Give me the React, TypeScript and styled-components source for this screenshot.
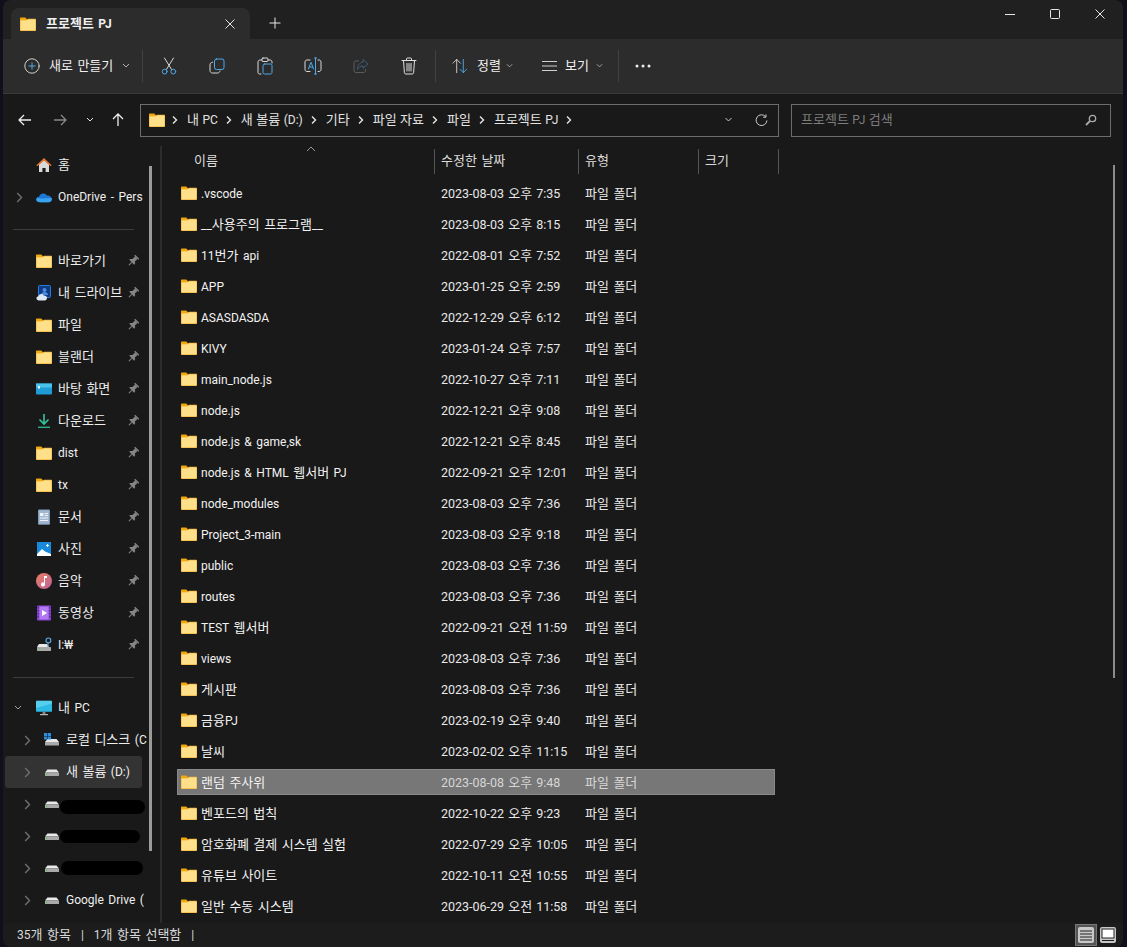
import React from "react";
import styled, { createGlobalStyle } from "styled-components";

const Global = createGlobalStyle`
  html, body { margin: 0; padding: 0; height: 100%; background: #10101a; }
  #root { height: 100%; }
  * { box-sizing: border-box; }
`;

const FONT = `Roboto, "Noto Sans CJK KR", sans-serif`;

const Window = styled.div`
  width: 1127px; height: 947px; padding-left: 3px; padding-right: 4px;
  display: flex; flex-direction: column;
  background: #10101a; font-family: ${FONT}; font-size: 12px; word-spacing: 1.5px; color: #ececec; overflow: hidden;
`;
const Han = styled.span`
  font-family: "Noto Sans CJK KR", sans-serif; font-size: 13px; line-height: 0;
`;
const Mixed = ({ children }: { children: string }) => (
  <>
    {children.split(/([\uAC00-\uD7A3]+)/).map((part, i) =>
      i % 2 === 1 ? <Han key={i}>{part}</Han> : part
    )}
  </>
);

const TitleBar = styled.div`
  height: 39px; flex: none; display: flex; align-items: flex-end; padding-left: 8px;
  background: #202020; border-radius: 8px 8px 0 0;
`;
const Tab = styled.div`
  width: 239px; height: 31px; display: flex; align-items: center; padding: 0 15px 0 9px;
  background: #2c2c2c; border-radius: 8px 8px 0 0;
`;
const TabTitle = styled.span`
  flex: 1; margin-left: 10px; font-weight: 700; color: #f0f0f0;
`;
const NewTab = styled.div`
  margin: 0 0 10px 19px; width: 12px; height: 12px; display: flex;
`;
const Spacer = styled.div`flex: 1;`;
const Caption = styled.div`
  align-self: flex-start; display: flex; margin-top: 9px; margin-right: 18px; gap: 35px;
`;
const CaptionButton = styled.div`width: 10px; height: 10px; display: flex;`;

const Toolbar = styled.div`
  height: 55px; flex: none; display: flex; align-items: center; padding-left: 21px;
  background: #2c2c2c; border-bottom: 1px solid #3a3a3a;
`;
const ToolLabel = styled.span`color: #f0f0f0; white-space: nowrap;`;
const ToolGroup = styled.div<{ $gap?: number; $w?: number; $ml?: number }>`
  display: flex; align-items: center; gap: ${(p) => p.$gap ?? 6}px; flex: none;
  width: ${(p) => (p.$w ? `${p.$w}px` : "auto")}; margin-left: ${(p) => p.$ml ?? 0}px;
`;
const Caret = styled.div<{ $ml?: number }>`
  display: flex; margin-left: ${(p) => p.$ml ?? 0}px;
`;
const ToolSep = styled.div<{ $ml?: number }>`
  width: 1px; height: 32px; background: #424242; flex: none; margin-left: ${(p) => p.$ml ?? 0}px;
`;
const IconSlot = styled.div<{ $ml?: number }>`
  width: 20px; height: 20px; display: flex; align-items: center; justify-content: center; flex: none;
  margin-left: ${(p) => p.$ml ?? 0}px;
`;

const NavRow = styled.div`
  height: 52px; flex: none; display: flex; align-items: center; padding-left: 12px; background: #191919;
`;
const NavBtn = styled.div<{ $ml?: number }>`
  width: 20px; height: 20px; display: flex; align-items: center; justify-content: center; flex: none;
  margin-left: ${(p) => p.$ml ?? 0}px;
`;
const Address = styled.div`
  width: 639px; height: 33px; margin-left: 12px; display: flex; align-items: center; padding: 0 10px 0 8px;
  border: 1px solid #6d6d6d; background: #191919; flex: none;
`;
const Crumbs = styled.div`
  flex: 1; display: flex; align-items: center; gap: 6px; margin-left: 5px; color: #e4e4e4; white-space: nowrap; word-spacing: 0.5px;
`;
const Chev = styled.span`display: inline-flex; width: 8px; height: 10px; margin: 0 2px 0 1px;`;
const AddressTools = styled.div`display: flex; align-items: center; gap: 22px;`;
const Search = styled.div`
  width: 320px; height: 33px; margin-left: 12px; display: flex; align-items: center; justify-content: space-between;
  padding: 0 13px 0 9px; border: 1px solid #6d6d6d; color: #7d7d7d; flex: none; word-spacing: 0.5px;
`;

const Body = styled.div`flex: 1; min-height: 0; display: flex; background: #191919;`;
const Sidebar = styled.div`
  width: 159px; flex: none; display: flex; border-right: 2px solid #2c2c2c;
`;
const SideList = styled.div`
  width: 140px; padding-top: 3px; flex: none; display: flex; flex-direction: column;
`;
const SideThumb = styled.div`
  width: 3px; height: 685px; margin: 20px 0 0 6px; background: #9b9b9b; flex: none;
`;
const SideRow = styled.div<{ $sel?: boolean }>`
  height: 32px; flex: none; display: flex; align-items: center; position: relative; white-space: nowrap;
  background: ${(p) => (p.$sel ? "#333333" : "transparent")};
  border-radius: 3px; margin-left: ${(p) => (p.$sel ? "2px" : "0")}; margin-right: ${(p) => (p.$sel ? "1px" : "0")};
`;
const Expander = styled.div<{ $x: number }>`
  width: ${(p) => p.$x}px; flex: none; display: flex; justify-content: flex-end; padding-right: 13px;
`;
const SideIcon = styled.div`
  width: 16px; height: 16px; flex: none; display: flex; margin-right: 6px;
`;
const SideText = styled.span`flex: 1; color: #eeeeee;`;
const Pin = styled.div`
  width: 12px; height: 12px; flex: none; display: flex; margin-right: 4px;
`;
const Rule = styled.div<{ $t: number; $b: number }>`
  height: 1px; flex: none; background: #3d3d3d; width: 121px;
  margin: ${(p) => p.$t}px 6px ${(p) => p.$b}px 10px;
`;
const Blob = styled.div<{ $l: number; $w: number; $t: number; $h: number }>`
  position: absolute; left: ${(p) => p.$l}px; width: ${(p) => p.$w}px; top: ${(p) => p.$t}px; height: ${(p) => p.$h}px;
  background: #000; border-radius: 8px;
`;

const Main = styled.div`flex: 1; min-width: 0; display: flex; position: relative;`;
const Content = styled.div`width: 620px; flex: none; padding: 3px 0 0 15px;`;
const Header = styled.div`
  height: 25px; display: flex; color: #dcdcdc; position: relative; margin-bottom: 6px; margin-left: 1px;
`;
const HeadCell = styled.div<{ $w: number; $pl?: number }>`
  width: ${(p) => p.$w}px; flex: none; display: flex; align-items: center; padding-left: ${(p) => p.$pl ?? 6}px;
  border-right: 1px solid #555; padding-bottom: 2px;
`;
const SortCaret = styled.div`
  position: absolute; left: 128px; top: -3px; width: 10px; height: 6px; display: flex;
`;
const Rows = styled.div`display: flex; flex-direction: column; gap: 5px; width: 598px;`;
const Row = styled.div<{ $sel?: boolean }>`
  height: 26px; display: flex; align-items: center; flex: none; padding-top: 1px;
  background: ${(p) => (p.$sel ? "#777777" : "transparent")};
  outline: ${(p) => (p.$sel ? "1px solid #8a8a8a" : "none")}; outline-offset: -1px;
  color: ${(p) => (p.$sel ? "#d6d6d6" : "#e8e8e8")}; white-space: nowrap;
`;
const NameCell = styled.div`
  width: 258px; flex: none; display: flex; align-items: center; gap: 4px; padding-left: 4px; color: #f2f2f2;
`;
const FolderBox = styled.div`width: 16px; height: 16px; flex: none; display: flex; margin-top: -1px;`;
const DateCell = styled.div`width: 144px; flex: none; padding-left: 6px; font-size: 12.5px; word-spacing: 1px;`;
const TypeCell = styled.div`flex: 1; padding-left: 6px;`;
const MainThumb = styled.div`
  position: absolute; right: 8px; top: 19px; width: 2px; height: 513px; background: #8c8c8c;
`;

const Status = styled.div`
  height: 24px; flex: none; display: flex; align-items: center; padding: 0 4px 0 14px; gap: 10px;
  background: #1c1c1c; color: #d8d8d8; border-radius: 0 0 8px 8px;
`;
const StatusText = styled.span`white-space: pre;`;
const ViewSwitch = styled.div`display: flex;`;
const ViewBtn = styled.div<{ $on?: boolean }>`
  width: 22px; height: 22px; display: flex; align-items: center; justify-content: center; flex: none;
  background: ${(p) => (p.$on ? "#555" : "transparent")}; border: 1px solid ${(p) => (p.$on ? "#777" : "transparent")};
`;
const ViewIcon = styled.div`
  width: 16px; height: 16px; display: flex; background: #c8c8c8; border-radius: 2px;
`;

const Folder = () => (
  <svg width="16" height="16" viewBox="0 0 16 16" style={{ flex: "none" }}>
    <path d="M0 2.600C0 2 .4 1.600 1 1.600h4.200L7 3.200V6H0z" fill="#f0a90c" />
    <path d="M0 5c0-.7.4-1.100 1-1.100h5.300L8 2.700h7c.6 0 1 .4 1 1V14c0 .6-.4 1-1 1H1c-.6 0-1-.4-1-1z" fill="#f6b73c" />
    <path d="M.6 5.200c0-.4.2-.6.6-.6h5.400L8.200 3.400h6.600c.4 0 .6.2.6.6v9.700c0 .4-.2.6-.6.6H1.200c-.4 0-.6-.2-.6-.6z" fill="#ffe08a" />
  </svg>
);

const S = { fill: "none", stroke: "currentColor", strokeWidth: 1, strokeLinecap: "round" as const, strokeLinejoin: "round" as const };
const BLUE = "#4ea9e6";

const ChevRight = ({ c = "#6f6f6f" }: { c?: string }) => (
  <svg width="7" height="11" viewBox="0 0 7 11"><path d="M1.200 1l4.300 4.500L1.200 10" fill="none" stroke={c} strokeWidth="1.400" /></svg>
);
const ChevDown = ({ c = "#b0b0b0", w = 8 }: { c?: string; w?: number }) => (
  <svg width={w} height="6" viewBox="0 0 8 6"><path d="M1 1l3 3 3-3" fill="none" stroke={c} strokeWidth="1" /></svg>
);
const CrumbSep = () => (
  <Chev><svg width="8" height="10" viewBox="0 0 8 10"><path d="M2 1.500L5.500 5 2 8.500" fill="none" stroke="#e6e6e6" strokeWidth="1.400" /></svg></Chev>
);

const PinIcon = () => (
  <svg width="12" height="12" viewBox="0 0 12 12">
    <g transform="rotate(45 6 6)" fill="#858585">
      <rect x="3.200" y="0" width="5.600" height="1.500" />
      <path d="M4.300 1.500h3.400V5l1.800 1.500v1.300h-7V6.500L4.300 5z" />
      <rect x="5.500" y="7.800" width="1" height="4" />
    </g>
  </svg>
);

const Home = () => (
  <svg width="16" height="16" viewBox="0 0 16 16">
    <path d="M3 7.500L8 3l5 4.500V15H9.600v-4H6.400v4H3z" fill="#d9d9d9" />
    <path d="M0.400 8.200L8 1l7.600 7.200-1 1L8 3.200 1.400 9.200z" fill="#e6742c" />
  </svg>
);
const Cloud = () => (
  <svg width="16" height="16" viewBox="0 0 16 16">
    <path d="M4 13.200C1.800 13.200.2 12 .2 10.400c0-1.500 1.200-2.600 2.800-2.700C3.700 5.600 5.300 4.400 7.200 4.400c1.700 0 3 .9 3.700 2.200 2.700-.3 4.900 1.500 4.900 3.700 0 1.700-1.300 2.900-3 2.900z" fill="#1b78d6" />
    <path d="M.2 10.400C.2 12 1.800 13.200 4 13.200h8.800c1.700 0 3-1.200 3-2.900 0-.5-.1-.9-.3-1.300L6 9.500 1 9z" fill="#39a3ee" />
  </svg>
);
const DriveCloud = () => (
  <svg width="16" height="16" viewBox="0 0 16 16">
    <rect x="2.500" y="0.500" width="12" height="12" rx="1" fill="#0d3a80" stroke="#2c7ae0" />
    <circle cx="8.500" cy="5" r="2" fill="#4a8be0" />
    <path d="M5 10c0-1.800 1.500-3 3.500-3s3.500 1.200 3.500 3z" fill="#4a8be0" />
    <path d="M3 15.500c-1.500 0-2.600-1-2.600-2.200s1-2 2-2.100c.5-1.400 1.600-2.200 2.900-2.200 1.100 0 2 .6 2.500 1.500 1.900-.2 3.200 1 3.200 2.600 0 1.200-1 2.400-2.200 2.400z" fill="#dfe8f0" />
  </svg>
);
const Desktop = () => (
  <svg width="16" height="16" viewBox="0 0 16 16">
    <rect y="2.500" width="16" height="11" rx="1" fill="#1f9cd6" />
    <rect y="2.500" width="16" height="4" fill="#47c2ea" />
    <rect x="2" y="5" width="2" height="2.600" fill="#e8f8ff" />
  </svg>
);
const Download = () => (
  <svg width="16" height="16" viewBox="0 0 16 16">
    <path d="M8 1v9" stroke="#35c6a0" strokeWidth="1.600" /><path d="M3.500 6.500L8 11l4.500-4.500" fill="none" stroke="#35c6a0" strokeWidth="1.600" />
    <rect x="2" y="13.600" width="12" height="1.400" fill="#29b08c" />
  </svg>
);
const Docs = () => (
  <svg width="16" height="16" viewBox="0 0 16 16">
    <rect x="2" y="0.400" width="12" height="15.400" rx="1" fill="#7f9cbb" />
    <rect x="3" y="1.200" width="10" height="13.600" fill="#9fb6cc" />
    <path d="M4 4h3.500v3H4zM8.600 4H12v1H8.600zM8.600 6H12v1H8.600zM4 8.500h8v1H4zM4 11h8v1H4z" fill="#eef4f9" />
  </svg>
);
const Photo = () => (
  <svg width="16" height="16" viewBox="0 0 16 16">
    <rect x="1" y="1" width="14" height="14" fill="#1989dc" />
    <path d="M1 13l5-5 3 2.500L15 13v2H1z" fill="#fff" />
    <path d="M11 3h1v1h1v1h-1v1h-1V5h-1V4h1z" fill="#dff" />
  </svg>
);
const Music = () => (
  <svg width="16" height="16" viewBox="0 0 16 16">
    <defs><linearGradient id="mg" x1="0" y1="0" x2="1" y2="1"><stop offset="0" stopColor="#e88060" /><stop offset="1" stopColor="#c0609a" /></linearGradient></defs>
    <circle cx="8" cy="8" r="8" fill="url(#mg)" />
    <path d="M8 3h3v2H9v6.400a2 2 0 1 1-1-1.700z" fill="#fff" />
  </svg>
);
const Video = () => (
  <svg width="16" height="16" viewBox="0 0 16 16">
    <rect x="1" y="0.400" width="14" height="15.200" rx="1" fill="#8a45d6" />
    <rect x="3.400" y="1.600" width="9.200" height="12.800" fill="#b27af0" />
    <path d="M6 5l5 3-5 3z" fill="#fff" />
    <path d="M1.600 2h1v1.400h-1zM1.600 5h1v1.400h-1zM1.600 8h1v1.400h-1zM1.600 11h1v1.400h-1zM13.400 2h1v1.400h-1zM13.400 5h1v1.400h-1zM13.400 8h1v1.400h-1zM13.400 11h1v1.400h-1z" fill="#3c1a70" />
  </svg>
);
const Disk = () => (
  <svg width="16" height="16" viewBox="0 0 16 16">
    <path d="M3.500 5.500h9L15 8.500H1z" fill="#e8e8e8" />
    <rect x="1" y="8.500" width="14" height="3.500" rx=".6" fill="#a9a9a9" />
    <rect x="2.400" y="9.800" width="1.600" height="1" fill="#49d35a" />
  </svg>
);
const NetDisk = () => (
  <svg width="16" height="16" viewBox="0 0 16 16">
    <path d="M3 7h8l2 3H1z" fill="#e8e8e8" />
    <rect x="1" y="10" width="14" height="4" rx=".6" fill="#a9a9a9" />
    <rect x="2.400" y="11.400" width="1.600" height="1" fill="#49d35a" />
    <circle cx="12.400" cy="3.400" r="2.400" fill="none" stroke="#58a8dc" strokeWidth="1.200" />
    <path d="M12 6v4" stroke="#58a8dc" strokeWidth="1" />
  </svg>
);
const WinDisk = () => (
  <svg width="16" height="16" viewBox="0 0 16 16">
    <path d="M3.500 7h9L15 10H1z" fill="#e8e8e8" />
    <rect x="1" y="10" width="14" height="3.600" rx=".6" fill="#a9a9a9" />
    <path d="M0 1h3.200v3H0zM3.800 1H7v3H3.800zM0 4.600h3.200v3H0zM3.800 4.600H7v3H3.800z" fill="#2b8fe0" />
  </svg>
);
const Monitor = () => (
  <svg width="16" height="16" viewBox="0 0 16 16">
    <rect x="0" y="0.800" width="16" height="11" rx=".8" fill="#2dbbe6" />
    <path d="M0 1.600c0-.5.3-.8.8-.8h14.400c.5 0 .8.3.8.8v2L0 8z" fill="#6fdcf0" opacity=".6" />
    <rect x="6.600" y="11.800" width="2.800" height="2.400" fill="#8a8a8a" />
    <rect x="4" y="14" width="8" height="1.200" fill="#b5b5b5" />
  </svg>
);

type Side = { t: string; i: React.ReactNode };
const quick: Side[] = [
  { t: "바로가기", i: <Folder /> },
  { t: "내 드라이브", i: <DriveCloud /> },
  { t: "파일", i: <Folder /> },
  { t: "블랜더", i: <Folder /> },
  { t: "바탕 화면", i: <Desktop /> },
  { t: "다운로드", i: <Download /> },
  { t: "dist", i: <Folder /> },
  { t: "tx", i: <Folder /> },
  { t: "문서", i: <Docs /> },
  { t: "사진", i: <Photo /> },
  { t: "음악", i: <Music /> },
  { t: "동영상", i: <Video /> },
  { t: "I:₩", i: <NetDisk /> },
];

const files: [string, string][] = [
  [".vscode", "2023-08-03 오후 7:35"],
  ["__사용주의 프로그램__", "2023-08-03 오후 8:15"],
  ["11번가 api", "2022-08-01 오후 7:52"],
  ["APP", "2023-01-25 오후 2:59"],
  ["ASASDASDA", "2022-12-29 오후 6:12"],
  ["KIVY", "2023-01-24 오후 7:57"],
  ["main_node.js", "2022-10-27 오후 7:11"],
  ["node.js", "2022-12-21 오후 9:08"],
  ["node.js & game,sk", "2022-12-21 오후 8:45"],
  ["node.js & HTML 웹서버 PJ", "2022-09-21 오후 12:01"],
  ["node_modules", "2023-08-03 오후 7:36"],
  ["Project_3-main", "2023-08-03 오후 9:18"],
  ["public", "2023-08-03 오후 7:36"],
  ["routes", "2023-08-03 오후 7:36"],
  ["TEST 웹서버", "2022-09-21 오전 11:59"],
  ["views", "2023-08-03 오후 7:36"],
  ["게시판", "2023-08-03 오후 7:36"],
  ["금융PJ", "2023-02-19 오후 9:40"],
  ["날씨", "2023-02-02 오후 11:15"],
  ["랜덤 주사위", "2023-08-08 오후 9:48"],
  ["벤포드의 법칙", "2022-10-22 오후 9:23"],
  ["암호화폐 결제 시스템 실험", "2022-07-29 오후 10:05"],
  ["유튜브 사이트", "2022-10-11 오전 10:55"],
  ["일반 수동 시스템", "2023-06-29 오전 11:58"],
];

const crumbs = ["내 PC", "새 볼륨 (D:)", "기타", "파일 자료", "파일", "프로젝트 PJ"];

export default function App() {
  return (
    <Window>
      <Global />
      <TitleBar>
        <Tab>
          <Folder />
          <TabTitle><Mixed>프로젝트 PJ</Mixed></TabTitle>
          <svg width="10" height="10" viewBox="0 0 10 10"><path d="M.5.5l9 9M9.500.5l-9 9" stroke="#e6e6e6" /></svg>
        </Tab>
        <NewTab>
          <svg width="12" height="12" viewBox="0 0 12 12"><path d="M6 .5v11M.5 6h11" stroke="#e8e8e8" /></svg>
        </NewTab>
        <Spacer />
        <Caption>
          <CaptionButton><svg width="10" height="10" viewBox="0 0 10 10"><path d="M0 5.500h10" stroke="#e8e8e8" /></svg></CaptionButton>
          <CaptionButton><svg width="10" height="10" viewBox="0 0 10 10"><rect x=".5" y=".5" width="9" height="9" rx="1" fill="none" stroke="#e8e8e8" /></svg></CaptionButton>
          <CaptionButton><svg width="10" height="10" viewBox="0 0 10 10"><path d="M.5.5l9 9M9.500.5l-9 9" stroke="#e8e8e8" /></svg></CaptionButton>
        </Caption>
      </TitleBar>

      <Toolbar>
        <ToolGroup $gap={9} $w={118}>
          <svg width="16" height="16" viewBox="0 0 16 16" {...S} color="#d0d0d0"><circle cx="8" cy="8" r="7.200" /><path d="M8 4.800v6.400M4.800 8h6.400" stroke={BLUE} /></svg>
          <ToolLabel><Mixed>새로 만들기</Mixed></ToolLabel>
          <ChevDown />
        </ToolGroup>
        <ToolSep />
        <ToolGroup $gap={28} $ml={16}>
          <IconSlot>
            <svg width="16" height="18" viewBox="0 0 16 18" {...S} color="#d8d8d8">
              <path d="M3.500 1l7 11.400M12.500 1l-7 11.400" />
              <circle cx="3.700" cy="14.600" r="2.400" stroke={BLUE} /><circle cx="12.300" cy="14.600" r="2.400" stroke={BLUE} />
            </svg>
          </IconSlot>
          <IconSlot>
            <svg width="16" height="16" viewBox="0 0 16 16" {...S} color="#d8d8d8">
              <rect x="5.500" y="1" width="9.500" height="10.500" rx="2" stroke={BLUE} />
              <path d="M3.500 4.200C2 4.400 1 5.400 1 6.800v5.700C1 14 2 15 3.500 15h5c1.300 0 2.300-.9 2.500-2" />
            </svg>
          </IconSlot>
          <IconSlot>
            <svg width="16" height="18" viewBox="0 0 16 18" {...S} color="#d8d8d8">
              <path d="M5 3H3C1.800 3 1 3.800 1 5v10.500c0 1 .8 1.500 1.500 1.500H4" />
              <path d="M11 3h2c1.200 0 2 .8 2 2v1" />
              <rect x="5" y="1" width="6" height="3.500" rx="1" />
              <rect x="6" y="7" width="9" height="10" rx="1.500" stroke={BLUE} />
            </svg>
          </IconSlot>
          <IconSlot>
            <svg width="18" height="18" viewBox="0 0 18 18" {...S} color="#d8d8d8">
              <path d="M6 3H3C1.800 3 1 3.800 1 5v7.500c0 1.200.8 2 2 2h3M14 3h1.200c1 0 1.800.8 1.800 2v7.500c0 1.200-.8 2-1.800 2H14" />
              <path d="M10.500 1h2M10.500 17h2M11.500 1v16" stroke={BLUE} />
              <path d="M4.500 12l2.300-6.500h.4L9.500 12M5.300 10h3.400" stroke={BLUE} />
            </svg>
          </IconSlot>
          <IconSlot>
            <svg width="16" height="16" viewBox="0 0 16 16" fill="none" stroke="#5d5d5d" strokeLinejoin="round">
              <path d="M6 3H3C1.800 3 1 3.800 1 5v7.500c0 1.200.8 2 2 2h7.500c1.200 0 2-.8 2-2V11" />
              <path d="M10 1.500L15 6l-5 4.300V8C7 8 5.500 9.500 4.500 11.500c0-4 2-7 5.500-7.300z" stroke="#3f5d75" />
            </svg>
          </IconSlot>
          <IconSlot>
            <svg width="16" height="18" viewBox="0 0 16 18" {...S} color="#e0e0e0">
              <path d="M1 3.500h14M5.500 3.500V2c0-.6.4-1 1-1h3c.6 0 1 .4 1 1v1.500" />
              <path d="M2.500 3.500l.9 12.200c.1.800.6 1.300 1.400 1.300h6.400c.8 0 1.300-.5 1.400-1.300l.9-12.200M6 6.500v7.500M8 6.500v7.500M10 6.500v7.500" />
            </svg>
          </IconSlot>
        </ToolGroup>
        <ToolSep $ml={16} />
        <ToolGroup $gap={9} $w={73} $ml={16}>
          <svg width="16" height="16" viewBox="0 0 17 16" {...S} color="#d0d0d0">
            <path d="M5 15V1M1 5l4-4 4 4" />
            <path d="M12 1v14M8.500 11.500L12 15l3.500-3.500" stroke={BLUE} />
          </svg>
          <ToolLabel><Mixed>정렬</Mixed></ToolLabel>
          <Caret $ml={-4}><ChevDown w={7} /></Caret>
        </ToolGroup>
        <ToolGroup $gap={7} $w={69} $ml={16}>
          <svg width="17" height="12" viewBox="0 0 17 12"><path d="M1 1.500h15M1 6h15M1 10.500h15" stroke="#d0d0d0" /></svg>
          <ToolLabel><Mixed>보기</Mixed></ToolLabel>
          <ChevDown w={7} />
        </ToolGroup>
        <ToolSep $ml={8} />
        <IconSlot $ml={14}>
          <svg width="16" height="4" viewBox="0 0 16 4"><circle cx="2" cy="2" r="1.500" fill="#eee" /><circle cx="8" cy="2" r="1.500" fill="#eee" /><circle cx="14" cy="2" r="1.500" fill="#eee" /></svg>
        </IconSlot>
      </Toolbar>

      <NavRow>
        <NavBtn><svg width="14" height="12" viewBox="0 0 14 12" fill="none" stroke="#eee" strokeWidth="1.300"><path d="M13 6H1M6 1L1 6l5 5" /></svg></NavBtn>
        <NavBtn $ml={15}><svg width="14" height="12" viewBox="0 0 14 12" fill="none" stroke="#888" strokeWidth="1.300"><path d="M1 6h12M8 1l5 5-5 5" /></svg></NavBtn>
        <NavBtn $ml={10}><ChevDown c="#e6e6e6" w={10} /></NavBtn>
        <NavBtn $ml={8}><svg width="12" height="14" viewBox="0 0 12 14" fill="none" stroke="#eee" strokeWidth="1.300"><path d="M6 13V1M1 6l5-5 5 5" /></svg></NavBtn>
        <Address>
          <Folder />
          <Crumbs>
            {crumbs.map((c) => (
              <React.Fragment key={c}>
                <CrumbSep />
                <span><Mixed>{c}</Mixed></span>
              </React.Fragment>
            ))}
            <CrumbSep />
            <Spacer />
            <AddressTools>
              <ChevDown c="#c8c8c8" w={9} />
              <svg width="13" height="14" viewBox="0 0 14 14" fill="none" stroke="#d8d8d8">
                <path d="M11.500 3.500A5.800 5.800 0 1 0 12.800 7.500" /><path d="M11.800 1v3h-3" />
              </svg>
            </AddressTools>
          </Crumbs>
        </Address>
        <Search>
          <span><Mixed>프로젝트 PJ 검색</Mixed></span>
          <svg width="12" height="12" viewBox="0 0 12 12" fill="none" stroke="#aaa"><circle cx="7.500" cy="4.500" r="3.200" strokeWidth="1.300" /><path d="M5 7L1 11" strokeWidth="1.800" /></svg>
        </Search>
      </NavRow>

      <Body>
        <Sidebar>
          <SideList>
            <SideRow><Expander $x={33} /><SideIcon><Home /></SideIcon><SideText><Mixed>홈</Mixed></SideText></SideRow>
            <SideRow><Expander $x={33}><ChevRight /></Expander><SideIcon><Cloud /></SideIcon><SideText>OneDrive - Pers</SideText></SideRow>
            <Rule $t={16} $b={15} />
            {quick.map((q) => (
              <SideRow key={q.t}><Expander $x={33} /><SideIcon>{q.i}</SideIcon><SideText><Mixed>{q.t}</Mixed></SideText><Pin><PinIcon /></Pin></SideRow>
            ))}
            <Rule $t={16} $b={14} />
            <SideRow><Expander $x={33}><ChevDown c="#a0a0a0" w={10} /></Expander><SideIcon><Monitor /></SideIcon><SideText><Mixed>내 PC</Mixed></SideText></SideRow>
            <SideRow><Expander $x={41}><ChevRight /></Expander><SideIcon><WinDisk /></SideIcon><SideText><Mixed>로컬 디스크 (C</Mixed></SideText></SideRow>
            <SideRow $sel><Expander $x={39}><ChevRight /></Expander><SideIcon><Disk /></SideIcon><SideText><Mixed>새 볼륨 (D:)</Mixed></SideText></SideRow>
            <SideRow><Expander $x={41}><ChevRight /></Expander><SideIcon><Disk /></SideIcon><Blob $l={57} $w={85} $t={12} $h={14} /></SideRow>
            <SideRow><Expander $x={41}><ChevRight /></Expander><SideIcon><Disk /></SideIcon><Blob $l={57} $w={80} $t={10} $h={13} /></SideRow>
            <SideRow><Expander $x={41}><ChevRight /></Expander><SideIcon><Disk /></SideIcon><Blob $l={58} $w={82} $t={9} $h={14} /></SideRow>
            <SideRow><Expander $x={41}><ChevRight /></Expander><SideIcon><Disk /></SideIcon><SideText>Google Drive (</SideText></SideRow>
          </SideList>
          <SideThumb />
        </Sidebar>
        <Main>
          <Content>
            <Header>
              <HeadCell $w={257} $pl={16}><span><Mixed>이름</Mixed></span></HeadCell>
              <HeadCell $w={144}><span><Mixed>수정한 날짜</Mixed></span></HeadCell>
              <HeadCell $w={120}><span><Mixed>유형</Mixed></span></HeadCell>
              <HeadCell $w={80}><span><Mixed>크기</Mixed></span></HeadCell>
              <SortCaret><svg width="10" height="6" viewBox="0 0 10 6"><path d="M1 5l4-4 4 4" fill="none" stroke="#999" /></svg></SortCaret>
            </Header>
            <Rows>
              {files.map(([name, date]) => (
                <Row key={name} $sel={name === "랜덤 주사위"}>
                  <NameCell><FolderBox><Folder /></FolderBox><span><Mixed>{name}</Mixed></span></NameCell>
                  <DateCell><Mixed>{date}</Mixed></DateCell>
                  <TypeCell><Mixed>파일 폴더</Mixed></TypeCell>
                </Row>
              ))}
            </Rows>
          </Content>
          <MainThumb />
        </Main>
      </Body>

      <Status>
        <StatusText><Mixed>35개 항목</Mixed></StatusText>
        <StatusText>|</StatusText>
        <StatusText><Mixed>1개 항목 선택함</Mixed></StatusText>
        <StatusText>|</StatusText>
        <Spacer />
        <ViewSwitch>
          <ViewBtn $on>
            <ViewIcon><svg width="16" height="16" viewBox="0 0 16 16"><path d="M2 4h12M2 7h12M2 10h12M2 13h12" stroke="#222" /></svg></ViewIcon>
          </ViewBtn>
          <ViewBtn>
            <ViewIcon><svg width="16" height="16" viewBox="0 0 16 16"><rect x="2" y="2" width="12" height="9" fill="#fff" stroke="#222" /><path d="M2 13.500h12" stroke="#222" /></svg></ViewIcon>
          </ViewBtn>
        </ViewSwitch>
      </Status>
    </Window>
  );
}
